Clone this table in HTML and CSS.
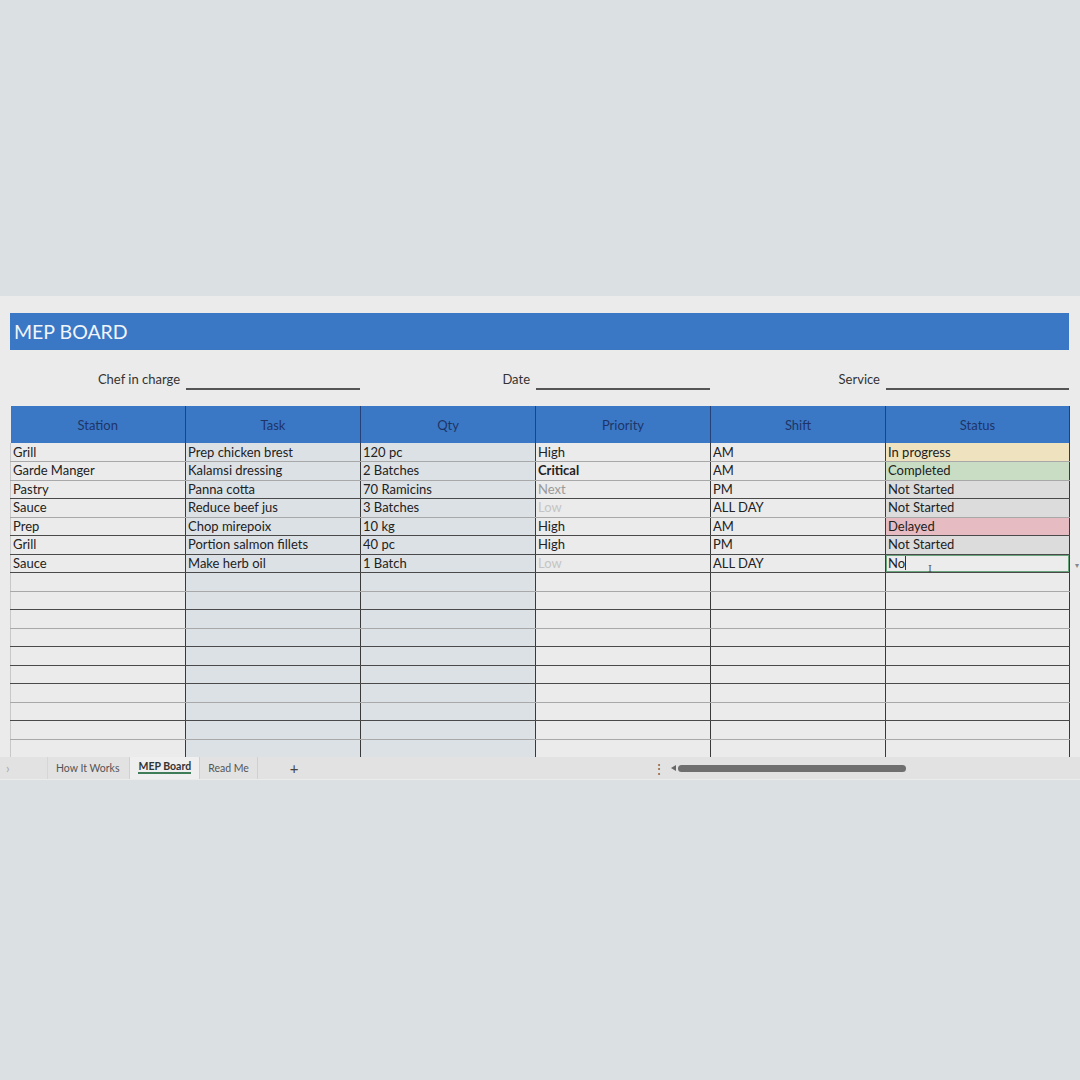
FILE: index.html
```html
<!DOCTYPE html>
<html>
<head>
<meta charset="utf-8">
<link rel="stylesheet" href="styles.css">
</head>
<body>
<div class="spacer"></div>
<div class="sheet">
  <div class="title">MEP BOARD</div>
  <div class="form">
    <div class="label">Chef in charge</div><div class="blank"></div>
    <div class="label">Date</div><div class="blank"></div>
    <div class="label">Service</div><div class="blank"></div>
  </div>
  <div class="tablewrap">
    <table class="board">
      <colgroup><col class="c"><col class="c"><col class="c"><col class="c"><col class="c"><col class="c6"></colgroup>
      <thead>
        <tr><th>Station</th><th>Task</th><th>Qty</th><th>Priority</th><th>Shift</th><th>Status</th></tr>
      </thead>
      <tbody>
        <tr><td>Grill</td><td class="b">Prep chicken brest</td><td class="b">120 pc</td><td>High</td><td>AM</td><td class="st prog">In progress</td></tr>
        <tr><td>Garde Manger</td><td class="b">Kalamsi dressing</td><td class="b">2 Batches</td><td class="crit">Critical</td><td>AM</td><td class="st done">Completed</td></tr>
        <tr><td>Pastry</td><td class="b">Panna cotta</td><td class="b">70 Ramicins</td><td class="next">Next</td><td>PM</td><td class="st ns">Not Started</td></tr>
        <tr><td>Sauce</td><td class="b">Reduce beef jus</td><td class="b">3 Batches</td><td class="low">Low</td><td>ALL DAY</td><td class="st ns">Not Started</td></tr>
        <tr><td>Prep</td><td class="b">Chop mirepoix</td><td class="b">10 kg</td><td>High</td><td>AM</td><td class="st del">Delayed</td></tr>
        <tr><td>Grill</td><td class="b">Portion salmon fillets</td><td class="b">40 pc</td><td>High</td><td>PM</td><td class="st ns">Not Started</td></tr>
        <tr><td>Sauce</td><td class="b">Make herb oil</td><td class="b">1 Batch</td><td class="low">Low</td><td>ALL DAY</td><td class="st sel"><span class="typed">No</span><span class="caret"></span><span class="ibeam">I</span><span class="dd">▾</span></td></tr>
        <tr><td></td><td class="b"></td><td class="b"></td><td></td><td></td><td></td></tr>
        <tr><td></td><td class="b"></td><td class="b"></td><td></td><td></td><td></td></tr>
        <tr><td></td><td class="b"></td><td class="b"></td><td></td><td></td><td></td></tr>
        <tr><td></td><td class="b"></td><td class="b"></td><td></td><td></td><td></td></tr>
        <tr><td></td><td class="b"></td><td class="b"></td><td></td><td></td><td></td></tr>
        <tr><td></td><td class="b"></td><td class="b"></td><td></td><td></td><td></td></tr>
        <tr><td></td><td class="b"></td><td class="b"></td><td></td><td></td><td></td></tr>
        <tr><td></td><td class="b"></td><td class="b"></td><td></td><td></td><td></td></tr>
        <tr><td></td><td class="b"></td><td class="b"></td><td></td><td></td><td></td></tr>
        <tr class="cut"><td></td><td class="b"></td><td class="b"></td><td></td><td></td><td></td></tr>
      </tbody>
    </table>
  </div>
  <div class="tabbar">
    <span class="chev">›</span>
    <span class="tab first">How It Works</span>
    <span class="tab active">MEP Board</span>
    <span class="tab">Read Me</span>
    <span class="plus">+</span>
    <span class="grow"></span>
    <span class="dots">⋮</span>
    <span class="arrow"></span>
    <span class="thumb"></span>
    <span class="track"></span>
  </div>
</div>
</body>
</html>
```

FILE: styles.css
```css
* { box-sizing: border-box; }
body {
  margin: 0;
  background: #dbe0e3;
  font-family: Lato, "Liberation Sans", sans-serif;
  color: #222;
  height: 1080px;
  overflow: hidden;
}
.spacer { height: 296px; }
.sheet {
  background: #ebebeb;
  padding-top: 17px;
  height: 484px;
  display: flex;
  flex-direction: column;
}
.title {
  margin: 0 11px 0 10px;
  height: 37px;
  background: #3a78c6;
  color: #f1f4f9;
  font-size: 19.5px;
  line-height: 37px;
  padding-left: 4px;
}
.form {
  height: 56px;
  margin-left: 10px;
  display: grid;
  grid-template-columns: 175px 175px 175px 175px 175px 184px;
  align-items: start;
  padding-top: 21px;
}
.label {
  text-align: right;
  padding-right: 5px;
  font-size: 13px;
  color: #333;
  line-height: 17px;
}
.blank {
  height: 19px;
  border-bottom: 2px solid #555;
  margin-left: 1px;
}
.tablewrap {
  margin-left: 10px;
  height: 351px;
  overflow: hidden;
  flex: none;
}
.board {
  border-collapse: collapse;
  table-layout: fixed;
  width: 1059px;
  font-size: 13px;
}
.board col.c { width: 175px; }
.board col.c6 { width: 184px; }
.board th {
  height: 37px;
  background: #3a78c6;
  color: #1f3466;
  font-weight: normal;
  font-size: 13px;
  border-left: 1px solid #24417a;
  padding: 0;
}
.board th:first-child { border-left: none; }
.board th:last-child { border-right: 1px solid #2a3f66; }
.board td {
  height: 18.5px;
  padding: 0 2px;
  line-height: 17px;
  border-left: 1px solid #3a3a3a;
  border-bottom: 1px solid #a8a8a8;
  white-space: nowrap;
  overflow: visible;
  position: relative;
}
.board td:first-child { border-left: 1px solid #c8c8c8; }
.board td:last-child { border-right: 1px solid #3a3a3a; }
.board tbody tr:nth-child(3n+3) td,
.board tbody tr:nth-child(2n+5) td { border-bottom-color: #4a4a4a; }
.board td.b { background: #dce1e6; }
.crit { font-weight: bold; }
.next { color: #9a9a9a; }
.low { color: #c4c4c4; }
.st.prog { background: #efe3bf; }
.st.done { background: #c9ddc5; }
.st.ns { background: #dcdcdc; }
.st.del { background: #e6bcc2; }
.st.sel { box-shadow: inset 0 0 0 1px #6aa47c; background: #ececec; }
.caret {
  display: inline-block;
  width: 1px;
  height: 14px;
  background: #333;
  vertical-align: -2px;
}
.ibeam {
  position: absolute;
  left: 42px;
  top: 5px;
  font-family: "DejaVu Serif", serif;
  font-size: 10px;
  color: #555;
}
.dd {
  position: absolute;
  right: -10px;
  top: 2px;
  font-size: 8px;
  color: #888;
}
.tabbar {
  height: 22px;
  background: #e2e2e2;
  display: flex;
  align-items: center;
  font-size: 10.5px;
  color: #555;
  flex: none;
}
.chev { width: 47px; padding-left: 6px; color: #aaa; font-size: 13px; }
.tab {
  padding: 0 8px;
  height: 22px;
  line-height: 22px;
  border-right: 1px solid #d0d0d0;
}
.tab.first { border-left: 1px solid #d6d6d6; padding-right: 10px; }
.tab.active {
  background: #efefef;
  font-weight: bold;
  color: #333;
  position: relative;
  line-height: 18px;
  padding: 0 8px;
}
.tab.active::after {
  content: "";
  position: absolute;
  left: 8px; right: 8px;
  bottom: 5px;
  height: 2px;
  background: #3e7d58;
}
.plus { margin-left: 32px; font-size: 15px; color: #444; }
.grow { width: 354px; }
.dots { font-size: 12px; color: #555; width: 14px; }
.arrow {
  width: 0; height: 0;
  border-top: 3px solid transparent;
  border-bottom: 3px solid transparent;
  border-right: 5px solid #666;
  margin-left: 4px;
  margin-right: 2px;
}
.thumb {
  width: 228px;
  height: 7px;
  border-radius: 4px;
  background: #6f6f6f;
}
.track { flex: 1; }
```
